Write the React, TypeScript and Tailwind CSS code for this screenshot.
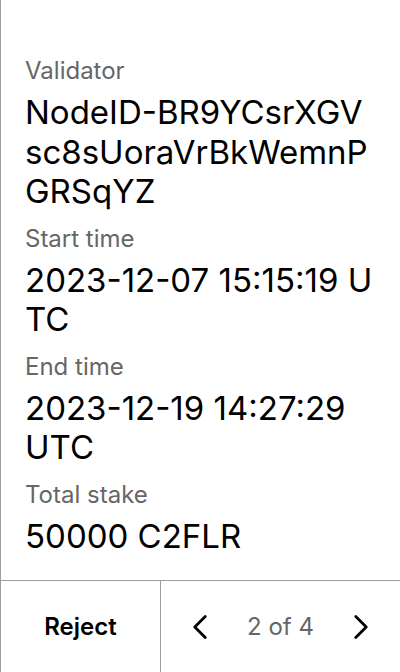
import React from 'react';
import { ChevronLeft, ChevronRight } from 'lucide-react';

const fields = [
  { label: 'Validator', value: 'NodeID-BR9YCsrXGVsc8sUoraVrBkWemnPGRSqYZ' },
  { label: 'Start time', value: '2023-12-07 15:15:19 UTC' },
  { label: 'End time', value: '2023-12-19 14:27:29 UTC' },
  { label: 'Total stake', value: '50000 C2FLR' },
];

const App: React.FC = () => {
  return (
    <div
      className="flex h-[672px] w-[400px] flex-col border-l border-[#9e9e9e] bg-white text-black"
      style={{ fontFamily: 'Inter, "Liberation Sans", sans-serif' }}
    >
      <div className="flex flex-1 flex-col gap-[11px] pl-6 pr-[26px] pt-[55px]">
        {fields.map((field) => (
          <div key={field.label} className="flex flex-col gap-[6px]">
            <p className="text-[24px] leading-[32px] text-[#666666]">{field.label}</p>
            <p className="break-all text-[33px] leading-[39.5px]">{field.value}</p>
          </div>
        ))}
      </div>

      <div className="flex h-[92px] border-t border-[#9e9e9e]">
        <button className="flex w-[160px] items-center justify-center border-r border-[#9e9e9e] text-[24px] font-semibold">
          Reject
        </button>
        <div className="flex flex-1 items-center justify-between px-[18px]">
          <ChevronLeft size={42} strokeWidth={1.6} />
          <span className="text-[24px] text-[#666666]">2 of 4</span>
          <ChevronRight size={42} strokeWidth={1.6} />
        </div>
      </div>
    </div>
  );
};

export default App;
